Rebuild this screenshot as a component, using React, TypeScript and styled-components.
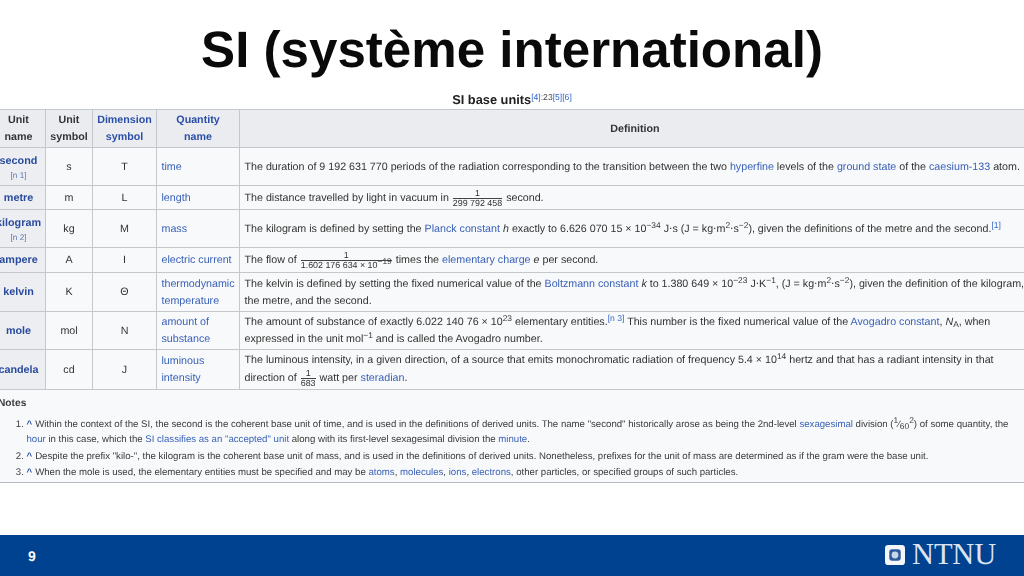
import React from "react";
import styled, { createGlobalStyle } from "styled-components";

const Global = createGlobalStyle`
  html, body { margin: 0; padding: 0; background: #fff; }
  body { font-family: "Liberation Sans", Arial, sans-serif; text-rendering: geometricPrecision; }
  #root { width: 1024px; height: 576px; overflow: hidden; }
  * { box-sizing: border-box; }
`;

const Slide = styled.div`
  width: 1024px;
  height: 576px;
  display: flex;
  flex-direction: column;
  overflow: hidden;
`;
const Title = styled.h1`
  margin: 0;
  height: 91px;
  padding-top: 20px;
  font-size: 51.1px;
  line-height: 60px;
  font-weight: 700;
  color: #0a0a0a;
  text-align: center;
  white-space: nowrap;
`;
const Shot = styled.div`
  flex: 1;
  min-height: 0;
  display: flex;
  flex-direction: column;
  filter: blur(0.4px);
`;
const Caption = styled.div`
  height: 18px;
  line-height: 17px;
  font-size: 12.8px;
  font-weight: 700;
  color: #222;
  text-align: center;
`;
const Sup = styled.sup`
  font-size: 8.6px;
  font-weight: 400;
  line-height: 0;
  vertical-align: baseline;
  position: relative;
  top: -4px;
  color: ${(p: { $plain?: boolean }) => (p.$plain ? "#444" : "#3366cc")};
`;
const Table = styled.table`
  border-collapse: collapse;
  table-layout: fixed;
  width: 1039px;
  margin-left: -9px;
  font-size: 10.7px;
  color: #333;
  background: #f8f9fa;
  line-height: 17px;
`;
const Row = styled.tr<{ $h: number }>`
  height: ${(p) => p.$h}px;
`;
const Head = styled.th`
  border: 1px solid #c4c8cc;
  background: #eaecf0;
  padding: 1px 4px 0;
  font-weight: 700;
  text-align: center;
  color: #333;
  font-size: 10.7px;
`;
const RowHead = styled.th`
  border: 1px solid #c4c8cc;
  background: #eceef1;
  padding: 1px 0 0;
  font-weight: 700;
  text-align: center;
  white-space: nowrap;
  color: #2a4b9d;
  font-size: 10.8px;
`;
const Center = styled.td`
  border: 1px solid #c4c8cc;
  padding: 1px 0 0;
  text-align: center;
`;
const Cell = styled.td`
  border: 1px solid #c4c8cc;
  padding: 1px 4.5px 0;
  white-space: nowrap;
`;
const A = styled.span`
  color: #3a62b8;
`;
const BA = styled.span`
  color: #2a4ea8;
`;
const Ref = styled.div`
  font-size: 8.2px;
  font-weight: 400;
  line-height: 11px;
  color: #5a78bb;
`;
const Fraction = styled.span`
  display: inline-flex;
  flex-direction: column;
  vertical-align: middle;
  text-align: center;
  font-size: 8.9px;
  line-height: 8.6px;
  margin: 0 1px;
`;
const Top = styled.span`
  border-bottom: 1px solid #444;
`;
const Small = styled.sup`
  font-size: 8.4px;
  line-height: 0;
  vertical-align: baseline;
  position: relative;
  top: -4px;
`;
const Sub = styled.sub`
  font-size: 8.4px;
  line-height: 0;
  vertical-align: baseline;
  position: relative;
  top: 2px;
`;
const Notes = styled.div`
  background: #f8f9fa;
  height: 93px;
  border-bottom: 1px solid #b8bcc0;
  font-size: 9.63px;
  color: #3a3a3a;
  white-space: nowrap;
`;
const NotesTitle = styled.div`
  font-weight: 700;
  font-size: 10.2px;
  line-height: 14px;
  padding-top: 7px;
  margin-left: -2px;
  height: 27px;
`;
const List = styled.ol`
  margin: 0;
  padding: 0 0 0 26.5px;
  line-height: 15.3px;
`;
const Item = styled.li`
  margin-bottom: 1.1px;
`;
const Caret = styled.b`
  color: #2a4ea8;
  margin-right: 3px;
`;
const Spacer = styled.div`
  flex: 1;
`;
const Footer = styled.footer`
  height: 41px;
  flex: none;
  background: #004190;
  display: flex;
  align-items: center;
  padding: 0 28px;
`;
const PageNo = styled.div`
  color: #fff;
  font-weight: 700;
  font-size: 14px;
`;
const Logo = styled.div`
  margin-left: auto;
  margin-bottom: 2px;
  display: flex;
  align-items: center;
  gap: 7px;
`;
const LogoText = styled.span`
  font-family: "Liberation Serif", serif;
  font-size: 30.5px;
  line-height: 31px;
  color: #dbe4f0;
  letter-spacing: -0.2px;
`;

const rows = [38, 24, 38, 25, 39, 38, 40];

export default function App() {
  return (
    <Slide>
      <Global />
      <Title>SI (système international)</Title>
      <Shot>
        <Caption>
          SI base units<Sup>[4]</Sup><Sup $plain>:23</Sup><Sup>[5][6]</Sup>
        </Caption>
        <Table>
          <colgroup>
            <col width={54} />
            <col width={47} />
            <col width={64} />
            <col width={83} />
            <col width={791} />
          </colgroup>
          <tbody>
            <Row $h={rows[0]}>
              <Head>Unit<br />name</Head>
              <Head>Unit<br />symbol</Head>
              <Head><BA>Dimension<br />symbol</BA></Head>
              <Head><BA>Quantity<br />name</BA></Head>
              <Head>Definition</Head>
            </Row>
            <Row $h={rows[0]}>
              <RowHead>second<Ref>[n 1]</Ref></RowHead>
              <Center>s</Center>
              <Center>T</Center>
              <Cell><A>time</A></Cell>
              <Cell>The duration of 9 192 631 770 periods of the radiation corresponding to the transition between the two <A>hyperfine</A> levels of the <A>ground state</A> of the <A>caesium-133</A> atom.</Cell>
            </Row>
            <Row $h={rows[1]}>
              <RowHead>metre</RowHead>
              <Center>m</Center>
              <Center>L</Center>
              <Cell><A>length</A></Cell>
              <Cell>The distance travelled by light in vacuum in <Fraction><Top>1</Top><span>299 792 458</span></Fraction> second.</Cell>
            </Row>
            <Row $h={rows[2]}>
              <RowHead>kilogram<Ref>[n 2]</Ref></RowHead>
              <Center>kg</Center>
              <Center>M</Center>
              <Cell><A>mass</A></Cell>
              <Cell>The kilogram is defined by setting the <A>Planck constant</A> <i>h</i> exactly to 6.626 070 15 × 10<Small>−34</Small> J⋅s (J = kg⋅m<Small>2</Small>⋅s<Small>−2</Small>), given the definitions of the metre and the second.<Sup>[1]</Sup></Cell>
            </Row>
            <Row $h={rows[3]}>
              <RowHead>ampere</RowHead>
              <Center>A</Center>
              <Center>I</Center>
              <Cell><A>electric current</A></Cell>
              <Cell>The flow of <Fraction><Top>1</Top><span>1.602 176 634 × 10<Small>−19</Small></span></Fraction> times the <A>elementary charge</A> <i>e</i> per second.</Cell>
            </Row>
            <Row $h={rows[4]}>
              <RowHead>kelvin</RowHead>
              <Center>K</Center>
              <Center>Θ</Center>
              <Cell><A>thermodynamic<br />temperature</A></Cell>
              <Cell>The kelvin is defined by setting the fixed numerical value of the <A>Boltzmann constant</A> <i>k</i> to 1.380 649 × 10<Small>−23</Small> J⋅K<Small>−1</Small>, (J = kg⋅m<Small>2</Small>⋅s<Small>−2</Small>), given the definition of the kilogram,<br />the metre, and the second.</Cell>
            </Row>
            <Row $h={rows[5]}>
              <RowHead>mole</RowHead>
              <Center>mol</Center>
              <Center>N</Center>
              <Cell><A>amount of<br />substance</A></Cell>
              <Cell>The amount of substance of exactly 6.022 140 76 × 10<Small>23</Small> elementary entities.<Sup>[n 3]</Sup> This number is the fixed numerical value of the <A>Avogadro constant</A>, <i>N</i><Sub>A</Sub>, when<br />expressed in the unit mol<Small>−1</Small> and is called the Avogadro number.</Cell>
            </Row>
            <Row $h={rows[6]}>
              <RowHead>candela</RowHead>
              <Center>cd</Center>
              <Center>J</Center>
              <Cell><A>luminous<br />intensity</A></Cell>
              <Cell>The luminous intensity, in a given direction, of a source that emits monochromatic radiation of frequency 5.4 × 10<Small>14</Small> hertz and that has a radiant intensity in that<br />direction of <Fraction><Top>1</Top><span>683</span></Fraction> watt per <A>steradian</A>.</Cell>
            </Row>
          </tbody>
        </Table>
        <Notes>
          <NotesTitle>Notes</NotesTitle>
          <List>
            <Item><Caret>^</Caret>Within the context of the SI, the second is the coherent base unit of time, and is used in the definitions of derived units. The name "second" historically arose as being the 2nd-level <A>sexagesimal</A> division (<Small>1</Small>⁄<Sub>60</Sub><Small>2</Small>) of some quantity, the<br /><A>hour</A> in this case, which the <A>SI classifies as an "accepted" unit</A> along with its first-level sexagesimal division the <A>minute</A>.</Item>
            <Item><Caret>^</Caret>Despite the prefix "kilo-", the kilogram is the coherent base unit of mass, and is used in the definitions of derived units. Nonetheless, prefixes for the unit of mass are determined as if the gram were the base unit.</Item>
            <Item><Caret>^</Caret>When the mole is used, the elementary entities must be specified and may be <A>atoms</A>, <A>molecules</A>, <A>ions</A>, <A>electrons</A>, other particles, or specified groups of such particles.</Item>
          </List>
        </Notes>
        <Spacer />
      </Shot>
      <Footer>
        <PageNo>9</PageNo>
        <Logo>
          <svg width="20" height="20" viewBox="0 0 21 21" aria-hidden="true">
            <rect width="21" height="21" rx="3.5" fill="#f4f6fa" />
            <rect x="4.5" y="4.5" width="12" height="12" rx="3" fill="#2c5a9c" />
            <circle cx="10.5" cy="10.5" r="3.6" fill="#c9d6e8" />
          </svg>
          <LogoText>NTNU</LogoText>
        </Logo>
      </Footer>
    </Slide>
  );
}
